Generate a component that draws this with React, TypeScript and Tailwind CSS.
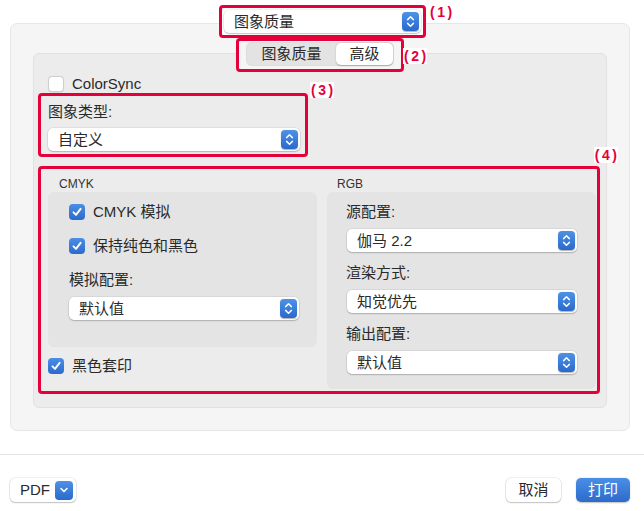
import React from "react";

const RED = "border-[#e4003a]";

function Stepper() {
  return (
    <span className="flex h-[19px] w-[17px] items-center justify-center rounded-[4px] bg-linear-to-b from-[#4d92e8] to-[#2a69cb] shadow-[0_0.5px_1px_rgba(0,0,0,0.3)]">
      <svg width="17" height="19" viewBox="0 0 17 19" fill="none">
        <path d="M5.6 7.6 L8.5 4.8 L11.4 7.6" stroke="white" strokeWidth="1.5" strokeLinecap="round" strokeLinejoin="round" />
        <path d="M5.6 11.4 L8.5 14.2 L11.4 11.4" stroke="white" strokeWidth="1.5" strokeLinecap="round" strokeLinejoin="round" />
      </svg>
    </span>
  );
}

function Popup({ label, className = "" }: { label: string; className?: string }) {
  return (
    <div
      className={`flex h-[23px] items-center justify-between rounded-[5px] bg-white pl-[10px] pr-[2px] text-[15px] text-[#2a2a2a] shadow-[0_0_0_0.5px_rgba(0,0,0,0.1),0_1px_1.5px_rgba(0,0,0,0.2)] ${className}`}
    >
      <span className="leading-[23px]">{label}</span>
      <Stepper />
    </div>
  );
}

function Checkbox({ checked }: { checked: boolean }) {
  if (!checked) {
    return (
      <span className="block h-[16px] w-[16px] rounded-[4px] border border-[#cfcfcf] bg-white shadow-[0_0.5px_1px_rgba(0,0,0,0.08)]" />
    );
  }
  return (
    <span className="flex h-[16px] w-[16px] items-center justify-center rounded-[4px] bg-linear-to-b from-[#4a8ee6] to-[#2c6bcb]">
      <svg width="12" height="12" viewBox="0 0 12 12" fill="none">
        <path d="M2.5 6.3 L5 8.8 L9.6 2.8" stroke="white" strokeWidth="1.9" strokeLinecap="round" strokeLinejoin="round" />
      </svg>
    </span>
  );
}

function CheckRow({ checked, label }: { checked: boolean; label: string }) {
  return (
    <div className="flex h-[16px] items-center gap-[8px] text-[15px] text-[#2a2a2a]">
      <Checkbox checked={checked} />
      <span className="leading-[16px]">{label}</span>
    </div>
  );
}

function Tag({ n, className }: { n: number; className: string }) {
  return (
    <span
      className={`absolute bg-white px-[1px] text-[14px] font-bold leading-[16px] text-[#e4003a] ${className}`}
    >
      (<span className="px-[2.5px]">{n}</span>)
    </span>
  );
}

export default function App() {
  return (
    <div className="relative h-[511px] w-[644px] overflow-hidden bg-white font-['Liberation_Sans','Noto_Sans_CJK_SC',sans-serif]">
      {/* top popup (1) */}
      <div className="flex justify-center pt-[5px] pl-[1px]">
        <div className={`relative z-10 w-[207px] rounded-[4px] border-[3px] ${RED} bg-white p-[2px]`}>
          <Popup label="图象质量" className="pl-[8px]" />
          <Tag n={1} className="left-[calc(100%+6px)] top-[-4px]" />
        </div>
      </div>

      {/* outer panel */}
      <div className="mx-[10px] -mt-[15px] flex w-[620px] flex-col items-center rounded-[7px] border border-[#e7e7e7] bg-[#f5f5f5] px-[22px] pt-[14px] pb-[22px]">
        {/* segmented (2) */}
        <div className={`relative z-10 rounded-[4px] border-[3px] ${RED} bg-[#f5f5f5] px-[7px] pt-[1px] pb-[3px]`}>
          <div className="flex h-[24px] w-[148px] items-center rounded-[6px] bg-[#e3e3e3] p-[1px] text-[15px] text-[#2a2a2a] shadow-[inset_0_0_0_0.5px_rgba(0,0,0,0.06)]">
            <span className="flex-1 text-center">图象质量</span>
            <span className="flex h-[22px] w-[57px] items-center justify-center rounded-[5px] bg-white shadow-[0_0.5px_1.5px_rgba(0,0,0,0.25)]">
              高级
            </span>
          </div>
          <Tag n={2} className="left-[calc(100%+2px)] top-[7px]" />
        </div>

        {/* inner panel */}
        <div className="-mt-[19px] flex w-full flex-col rounded-[6px] border border-[#e1e1e1] bg-[#ececec] pt-[22px] pb-[13px] pl-[4px]">
          <div className="ml-[10px]">
            <CheckRow checked={false} label="ColorSync" />
          </div>

          {/* (3) */}
          <div className={`relative mt-[1px] w-[270px] rounded-[4px] border-[3px] ${RED} pt-[7px] pr-[5px] pb-[3px] pl-[7px]`}>
            <div className="text-[15px] leading-[18px] text-[#2a2a2a]">图象类型:</div>
            <Popup label="自定义" className="mt-[7px]" />
            <Tag n={3} className="left-[calc(100%+5px)] top-[-14px]" />
          </div>

          {/* (4) */}
          <div className={`relative mt-[9px] grid w-[562px] grid-cols-2 gap-x-[10px] rounded-[4px] border-[3px] ${RED} pt-[8px] pr-[1px] pb-[2px] pl-[7px]`}>
            <Tag n={4} className="right-[-21px] top-[-22px]" />

            <div className="flex flex-col">
              <div className="pl-[11px] text-[12px] leading-[15px] text-[#333]">CMYK</div>
              <div className="flex h-[155px] flex-col rounded-[6px] bg-[#e4e4e4] pt-[12px] pr-[18px] pl-[21px]">
                <CheckRow checked label="CMYK 模拟" />
                <div className="mt-[18px]">
                  <CheckRow checked label="保持纯色和黑色" />
                </div>
                <div className="mt-[18px] text-[15px] leading-[16px] text-[#2a2a2a]">模拟配置:</div>
                <Popup label="默认值" className="mt-[9px]" />
              </div>
              <div className="mt-[11px]">
                <CheckRow checked label="黑色套印" />
              </div>
            </div>

            <div className="flex flex-col">
              <div className="pl-[10px] text-[12px] leading-[15px] text-[#333]">RGB</div>
              <div className="flex flex-col rounded-[6px] bg-[#e4e4e4] pt-[12px] pr-[19px] pb-[15px] pl-[19px]">
                <div className="text-[15px] leading-[16px] text-[#2a2a2a]">源配置:</div>
                <Popup label="伽马 2.2" className="mt-[9px] ml-[1px]" />
                <div className="mt-[13px] text-[15px] leading-[16px] text-[#2a2a2a]">渲染方式:</div>
                <Popup label="知觉优先" className="mt-[9px] ml-[1px]" />
                <div className="mt-[13px] text-[15px] leading-[16px] text-[#2a2a2a]">输出配置:</div>
                <Popup label="默认值" className="mt-[9px] ml-[1px]" />
              </div>
            </div>
          </div>
        </div>
      </div>

      {/* separator */}
      <div className="mt-[23px] h-px w-full bg-[#e2e2e2]" />

      {/* bottom bar */}
      <div className="mt-[23px] flex items-center px-[10px] pr-[14px] text-[15px]">
        <div className="flex h-[24px] w-[66px] items-center justify-between rounded-[5px] bg-white pl-[10px] pr-[3px] text-[#2a2a2a] shadow-[0_0_0_0.5px_rgba(0,0,0,0.12),0_1px_1.5px_rgba(0,0,0,0.2)]">
          <span>PDF</span>
          <span className="flex h-[19px] w-[18px] items-center justify-center rounded-[4px] bg-linear-to-b from-[#4d92e8] to-[#2a69cb]">
            <svg width="10" height="8" viewBox="0 0 10 8" fill="none">
              <path d="M2 2.5 L5 5.5 L8 2.5" stroke="white" strokeWidth="1.6" strokeLinecap="round" strokeLinejoin="round" />
            </svg>
          </span>
        </div>
        <div className="flex-1" />
        <button className="flex h-[24px] w-[55px] items-center justify-center rounded-[5px] bg-white text-[#2a2a2a] shadow-[0_0_0_0.5px_rgba(0,0,0,0.12),0_1px_1.5px_rgba(0,0,0,0.2)]">
          取消
        </button>
        <button className="ml-[15px] flex h-[24px] w-[54px] items-center justify-center rounded-[5px] bg-linear-to-b from-[#4a8ee6] to-[#2c6bcb] text-white shadow-[0_0.5px_1.5px_rgba(0,0,0,0.25)]">
          打印
        </button>
      </div>
    </div>
  );
}
